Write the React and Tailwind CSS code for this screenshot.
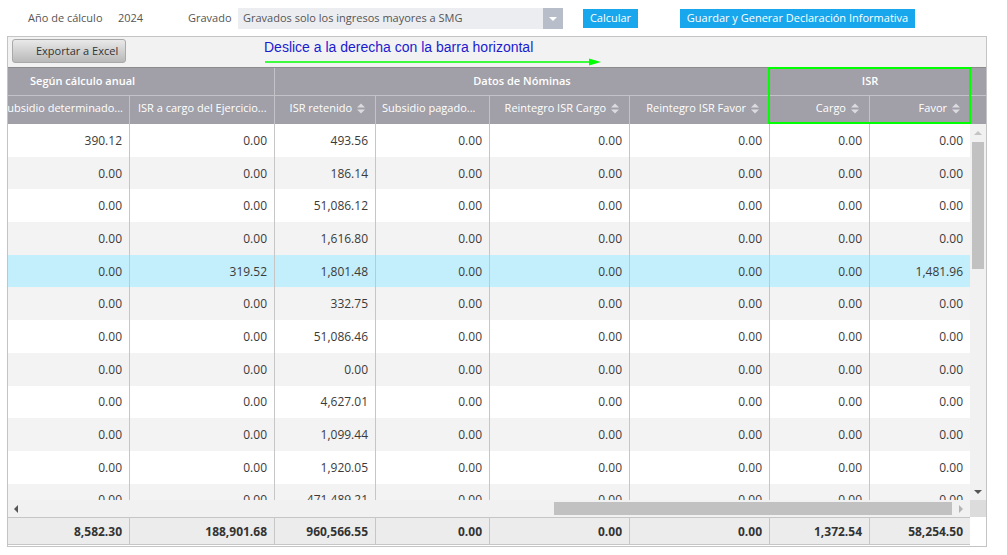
import React from "react";

const COLS = "grid-cols-[122px_145px_101px_114px_140px_140px_100px_100px]";

const rows = [
  ["390.12", "0.00", "493.56", "0.00", "0.00", "0.00", "0.00", "0.00"],
  ["0.00", "0.00", "186.14", "0.00", "0.00", "0.00", "0.00", "0.00"],
  ["0.00", "0.00", "51,086.12", "0.00", "0.00", "0.00", "0.00", "0.00"],
  ["0.00", "0.00", "1,616.80", "0.00", "0.00", "0.00", "0.00", "0.00"],
  ["0.00", "319.52", "1,801.48", "0.00", "0.00", "0.00", "0.00", "1,481.96"],
  ["0.00", "0.00", "332.75", "0.00", "0.00", "0.00", "0.00", "0.00"],
  ["0.00", "0.00", "51,086.46", "0.00", "0.00", "0.00", "0.00", "0.00"],
  ["0.00", "0.00", "0.00", "0.00", "0.00", "0.00", "0.00", "0.00"],
  ["0.00", "0.00", "4,627.01", "0.00", "0.00", "0.00", "0.00", "0.00"],
  ["0.00", "0.00", "1,099.44", "0.00", "0.00", "0.00", "0.00", "0.00"],
  ["0.00", "0.00", "1,920.05", "0.00", "0.00", "0.00", "0.00", "0.00"],
  ["0.00", "0.00", "471,489.21", "0.00", "0.00", "0.00", "0.00", "0.00"],
];

const totals = ["8,582.30", "188,901.68", "960,566.55", "0.00", "0.00", "0.00", "1,372.54", "58,254.50"];

function SortIcon() {
  return (
    <svg width="8" height="11" viewBox="0 0 8 11" className="ml-[5px] shrink-0">
      <path d="M0 4.5 L4 0.5 L8 4.5 Z" fill="#dcdbe0" />
      <path d="M0 6.5 L8 6.5 L4 10.5 Z" fill="#dcdbe0" />
    </svg>
  );
}

function Tri({ dir, color }) {
  const d = {
    up: "M0 5 L4 1 L8 5 Z",
    down: "M0 2 L8 2 L4 6 Z",
    left: "M5 0 L5 8 L1 4 Z",
    right: "M1 0 L1 8 L5 4 Z",
  }[dir];
  const wide = dir === "up" || dir === "down";
  return (
    <svg width={wide ? 8 : 6} height={wide ? 7 : 8} viewBox={wide ? "0 0 8 7" : "0 0 6 8"}>
      <path d={d} fill={color} />
    </svg>
  );
}

export default function App() {
  return (
    <div className="w-[1007px] h-[555px] bg-white font-['Open_Sans',sans-serif] text-[12px] text-[#3a3a3a] overflow-hidden">
      {/* Top bar */}
      <div className="h-[36px] flex items-center pl-[28px] text-[11px] text-[#555] whitespace-nowrap">
        <span className="w-[90px]">Año de cálculo</span>
        <span className="w-[70px]">2024</span>
        <span className="w-[50px]">Gravado</span>
        <div className="w-[325px] h-[21px] bg-[#ecedf1] flex items-center">
          <span className="flex-1 pl-[5px] truncate">Gravados solo los ingresos mayores a SMG</span>
          <div className="w-[20px] h-full bg-[#b8bec9] flex items-center justify-center">
            <Tri dir="down" color="#ffffff" />
          </div>
        </div>
        <button className="ml-[20px] w-[55px] h-[19px] bg-[#18a7ec] text-white flex items-center justify-center">
          Calcular
        </button>
        <button className="ml-[42px] w-[235px] h-[19px] bg-[#18a7ec] text-white flex items-center justify-center whitespace-nowrap">
          Guardar y Generar Declaración Informativa
        </button>
      </div>

      {/* Grid */}
      <div className="ml-[7px] w-[980px] border border-[#c4c4c4]">
        {/* Toolbar */}
        <div className="h-[31px] bg-[#f2f2f2] flex items-start border-b border-[#8c8c8c]">
          <button className="mt-[2px] ml-[4px] w-[114px] h-[24px] rounded-[3px] border border-[#a9a9a9] bg-linear-to-b from-[#e9e9e9] to-[#b9b9b9] text-[11px] text-[#333] pl-[23px] text-left whitespace-nowrap">
            Exportar a Excel
          </button>
          <div className="ml-[138px] flex flex-col">
            <span className="mt-[1px] font-['Liberation_Sans',Arial,sans-serif] text-[14px] text-[#1b1bd0] leading-[18px] whitespace-nowrap">
              Deslice a la derecha con la barra horizontal
            </span>
            <svg width="340" height="8" viewBox="0 0 340 8" className="mt-[2px] ml-[1px]">
              <line x1="0" y1="4" x2="326" y2="4" stroke="#00ff00" strokeWidth="1.5" />
              <path d="M324 0.5 L336 4 L324 7.5 Z" fill="#00ff00" />
            </svg>
          </div>
        </div>

        {/* Header */}
        <div className="relative bg-[#a19fa8] text-white text-[11px] whitespace-nowrap">
          <div className="flex h-[28px] border-b border-[#c3c2c8]">
            <div className="w-[267px] border-r border-[#c3c2c8] flex items-center pl-[22px] font-semibold">
              Según cálculo anual
            </div>
            <div className="w-[495px] border-r border-[#c3c2c8] flex items-center justify-center font-semibold">
              Datos de Nóminas
            </div>
            <div className="w-[200px] flex items-center justify-center font-semibold">ISR</div>
          </div>
          <div className="flex h-[28px]">
            <div className="w-[962px] grid grid-cols-[122px_145px_101px_114px_140px_140px_100px_100px]">
              <div className="border-r border-[#c3c2c8] flex items-center justify-end pr-[6px] pb-[3px] overflow-hidden">
                <span className="shrink-0">Subsidio determinado...</span>
              </div>
              <div className="border-r border-[#c3c2c8] flex items-center pl-[8px] pb-[3px] overflow-hidden">
                ISR a cargo del Ejercicio...
              </div>
              <div className="border-r border-[#c3c2c8] flex items-center justify-end pr-[10px] pb-[3px]">
                ISR retenido <SortIcon />
              </div>
              <div className="border-r border-[#c3c2c8] flex items-center pl-[6px] pb-[3px] overflow-hidden">
                Subsidio pagado...
              </div>
              <div className="border-r border-[#c3c2c8] flex items-center justify-end pr-[10px] pb-[3px]">
                Reintegro ISR Cargo <SortIcon />
              </div>
              <div className="border-r border-[#c3c2c8] flex items-center justify-end pr-[10px] pb-[3px]">
                Reintegro ISR Favor <SortIcon />
              </div>
              <div className="border-r border-[#c3c2c8] flex items-center justify-end pr-[10px] pb-[3px]">
                Cargo <SortIcon />
              </div>
              <div className="flex items-center justify-end pr-[10px] pb-[3px]">
                Favor <SortIcon />
              </div>
            </div>
          </div>
          <div className="absolute left-[760px] top-[-1px] w-[203px] h-[57px] border-2 border-[#00ff00]" />
        </div>

        {/* Body */}
        <div className="flex h-[376px]">
          <div className="w-[962px] h-full overflow-hidden">
            {rows.map((r, i) => (
              <div
                key={i}
                className={`grid ${COLS} h-[32.7px] ${
                  i === 4 ? "bg-[#c3eefb]" : i % 2 === 1 ? "bg-[#f3f3f3]" : "bg-white"
                }`}
              >
                {r.map((v, j) => (
                  <div
                    key={j}
                    className={`flex items-center justify-end pr-[7px] pt-[1px] ${j < 7 ? "border-r border-[#c6c6c6]" : ""}`}
                  >
                    {v}
                  </div>
                ))}
              </div>
            ))}
          </div>
          <div className="w-[16px] h-full bg-[#f1f1f1] flex flex-col items-center">
            <div className="h-[18px] flex items-center">
              <Tri dir="up" color="#c4c4c4" />
            </div>
            <div className="w-[12px] h-[127px] bg-[#c1c1c1]" />
            <div className="flex-1" />
            <div className="h-[18px] flex items-center">
              <Tri dir="down" color="#555555" />
            </div>
          </div>
        </div>

        {/* Horizontal scrollbar */}
        <div className="flex h-[17px]">
          <div className="w-[962px] bg-[#f1f1f1] flex items-center">
            <div className="w-[16px] flex justify-center">
              <Tri dir="left" color="#555555" />
            </div>
            <div className="ml-[530px] w-[398px] h-[13px] bg-[#c1c1c1]" />
            <div className="flex-1 flex justify-center">
              <Tri dir="right" color="#b4b4b4" />
            </div>
          </div>
          <div className="w-[16px] bg-[#dcdcdc]" />
        </div>

        {/* Footer totals */}
        <div className="flex pb-[1px]">
          <div className={`w-[962px] grid ${COLS} h-[28px] bg-[#ececec] border-t border-b border-[#c6c6c6] font-bold text-[#333]`}>
            {totals.map((v, j) => (
              <div
                key={j}
                className={`flex items-center justify-end pr-[7px] pt-[1px] ${j < 7 ? "border-r border-[#c6c6c6]" : ""}`}
              >
                {v}
              </div>
            ))}
          </div>
          <div className="w-[16px] bg-white" />
        </div>
      </div>
    </div>
  );
}
